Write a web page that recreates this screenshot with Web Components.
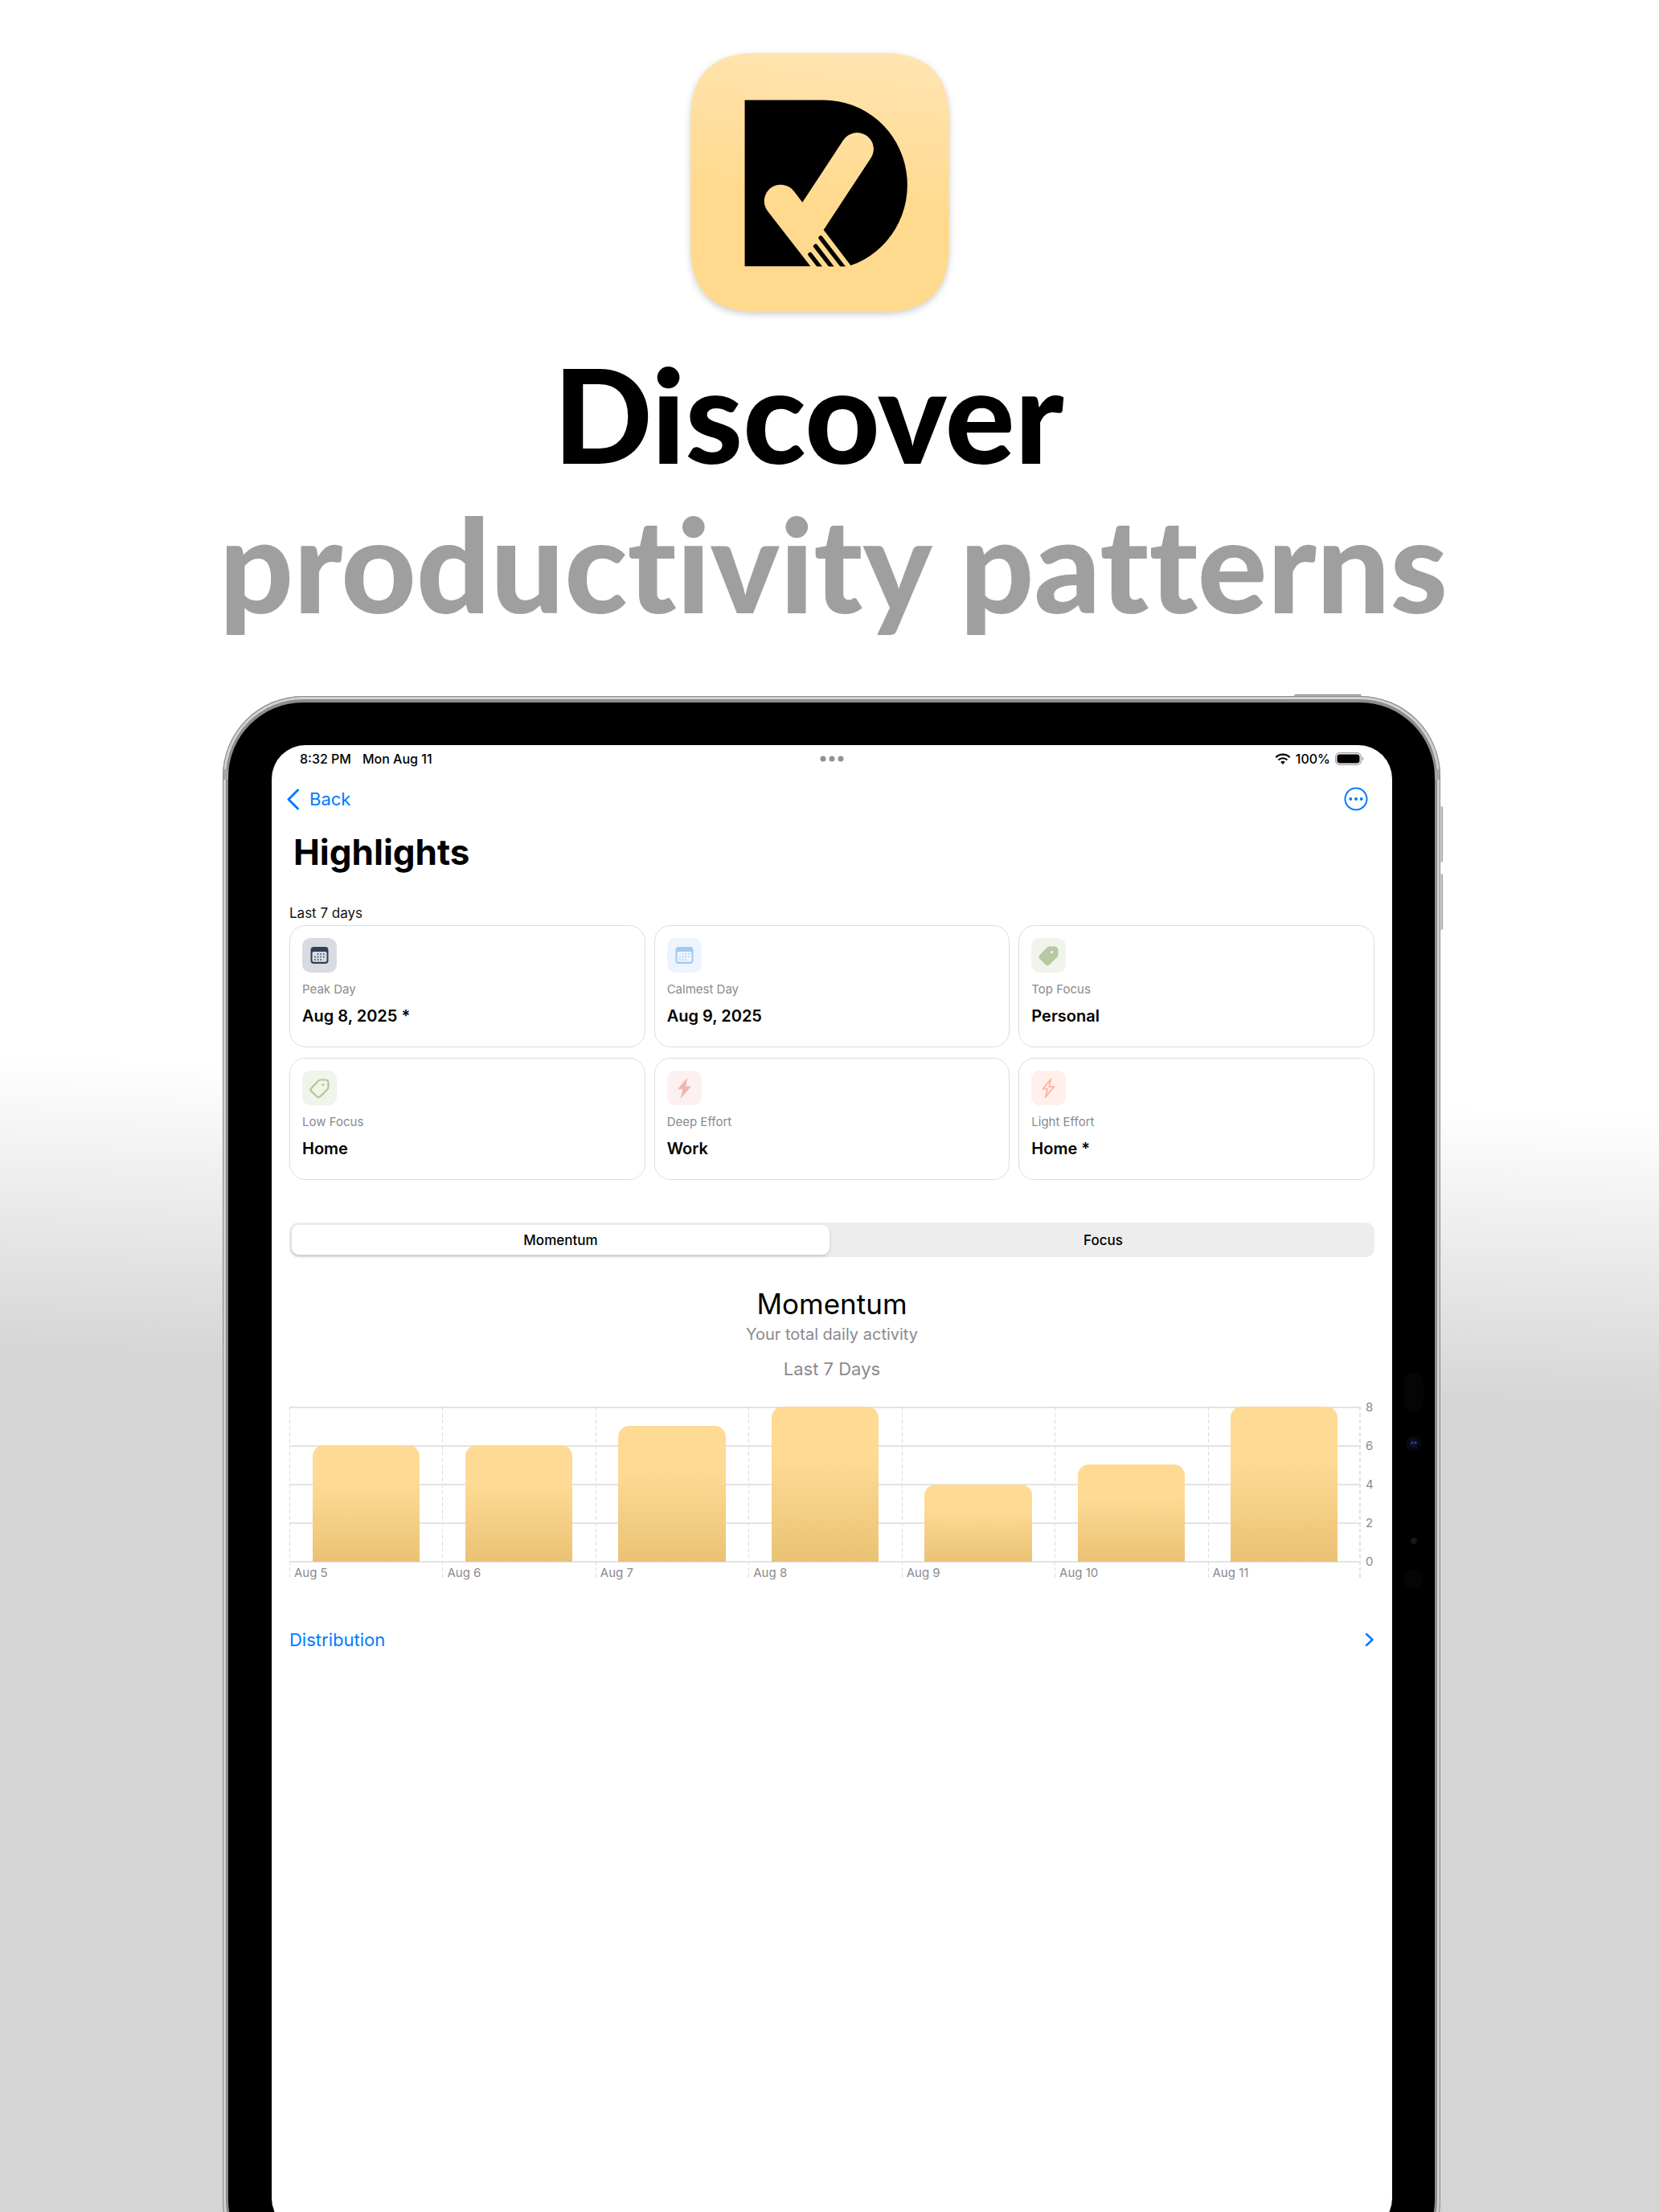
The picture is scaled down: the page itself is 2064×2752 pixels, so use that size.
<!DOCTYPE html>
<html lang="en">
<head>
<meta charset="utf-8">
<title>Discover productivity patterns</title>
<style>
  html, body { margin: 0; height: 100%; }
  body { font-family: Inter, "Liberation Sans", sans-serif; color: #000; }
</style>
</head>
<body>
<promo-page>
  <promo-headline slot="headline">
    <app-logo slot="logo"></app-logo>
    <span slot="lead">Discover</span>
    <span slot="rest">productivity patterns</span>
  </promo-headline>
  <tablet-frame>
    <status-bar></status-bar>
    <nav-bar></nav-bar>
    <highlight-grid>
      <stat-card label="Peak Day" value="Aug 8, 2025 *" icon="calendar" ink="#2f4059" tint="#d8dce2"></stat-card>
      <stat-card label="Calmest Day" value="Aug 9, 2025" icon="calendar" ink="#a3c9f0" tint="#edf4fd"></stat-card>
      <stat-card label="Top Focus" value="Personal" icon="tagfill" ink="#b7c9a3" tint="#f1f4ed"></stat-card>
      <stat-card label="Low Focus" value="Home" icon="tag" ink="#afc993" tint="#f0f4ea"></stat-card>
      <stat-card label="Deep Effort" value="Work" icon="boltfill" ink="#f0b4b4" tint="#fcf0f0"></stat-card>
      <stat-card label="Light Effort" value="Home *" icon="bolt" ink="#ffb9a6" tint="#fff0ec"></stat-card>
    </highlight-grid>
    <segment-control></segment-control>
    <bar-chart></bar-chart>
    <link-row>Distribution</link-row>
  </tablet-frame>
</promo-page>

<script>
const define = (name, html) => {
  customElements.define(name, class extends HTMLElement {
    constructor() {
      super();
      this.attachShadow({ mode: 'open' });
    }
    connectedCallback() {
      this.shadowRoot.innerHTML = typeof html === 'function' ? html(this) : html;
    }
  });
};

define('promo-page', `
  <style>
    :host { display: flex; flex-direction: column; gap: 72px; height: 100vh; overflow: hidden;
      background: linear-gradient(182deg, #fff 49%, #d5d5d5 62.2%); }
  </style>
  <slot name="headline"></slot>
  <slot></slot>`);

define('promo-headline', `
  <style>
    :host { display: flex; flex-direction: column; align-items: center; gap: 34px; padding: 66px 0 0; }
    .logo { padding-right: 24px; }
    h1 { margin: 0; padding-left: 10px; text-align: center; white-space: nowrap;
      font: 900 162px/186px Lato, sans-serif; font-variant-ligatures: none; color: #9f9f9f; }
    .lead, .rest { display: block; }
    .lead { color: #000; padding-right: 62px; }
  </style>
  <div class="logo"><slot name="logo"></slot></div>
  <h1><span class="lead"><slot name="lead"></slot></span><span class="rest"><slot name="rest"></slot></span></h1>`);

define('app-logo', `
  <style>
    :host { display: block; }
    svg { display: block; width: 322px; height: 322px; overflow: visible; filter: drop-shadow(0 3px 4px rgba(0,0,0,.2)); }
  </style>
  <svg viewBox="58 48 964 965" role="img" aria-label="App logo">
    <defs>
      <linearGradient id="g" x1=".56" y1="0" x2=".44" y2="1">
        <stop offset="0" stop-color="#ffe4b0"/><stop offset=".58" stop-color="#ffda8e"/>
      </linearGradient>
      <clipPath id="c"><path d="M260 223H900V843.500H260z"/></clipPath>
    </defs>
    <path fill="url(#g)" d="M300 48H780C940 48 1022 130 1022 290V771C1022 931 940 1013 780 1013H300C140 1013 58 931 58 771V290C58 130 140 48 300 48z"/>
    <path d="M260 223H555A312 317 0 0 1 655 840L554 707L730 440A61 61 0 0 0 628 372L475 605L443 563A61 61 0 0 0 345 637L505 843H260z"/>
    <g clip-path="url(#c)" stroke="#000" stroke-width="16" stroke-linecap="round">
      <path d="M504 799L552 861M524 768L596 861M543 737L639 861"/>
    </g>
  </svg>`);

define('tablet-frame', `
  <style>
    :host { display: block; flex: none; width: 73.4%; margin-left: 13.42%; position: relative; }
    .shell { position: relative; padding: 8px 7px; border-radius: 100px; background: #8b8e90;
      box-shadow: inset 0 0 0 1px #85888a, inset 0 0 0 4px #cfd1d3; }
    .bezel { padding: 53px 53px 53px 54px; border-radius: 93px; background: #000; }
    .screen { min-height: 1850px; border-radius: 42px; background: #fff; overflow: hidden; box-sizing: border-box;
      padding: 0 22px; display: flex; flex-direction: column; }
    i { position: absolute; }
    .key { background: linear-gradient(90deg, #9a9c9e, #e2e3e4 50%, #8a8c8e); width: 5px; height: 70px; right: -3px; border-radius: 0 2px 2px 0; }
    .up { top: 137px; } .down { top: 221px; }
    .power { top: -2px; right: 98px; width: 84px; height: 5px; border-radius: 2px 2px 0 0; background: #c4c6c7; border-top: 1px solid #77797b; box-sizing: border-box; }
    .band { top: 91px; width: 6px; height: 13px; background: #a3a5a7; }
    .band.l { left: 1px; } .band.r { right: 1px; }
    .pill { top: 842px; right: 21px; width: 25px; height: 49px; border-radius: 13px; background: #050505; }
    .cam { top: 920px; right: 24px; width: 19px; height: 19px; border-radius: 50%;
      background: radial-gradient(circle at 8px 9px, #4c5ac4, transparent 2px), radial-gradient(circle at 12px 9px, #4c5ac4, transparent 2px), radial-gradient(#0e1230 4px, #08080d 6px); }
    .mic { top: 1047px; right: 29px; width: 8px; height: 8px; border-radius: 50%; background: #161616; }
    .sensor { top: 1086px; right: 21px; width: 25px; height: 25px; border-radius: 50%; background: #050505; }
  </style>
  <i class="power"></i><i class="key up"></i><i class="key down"></i>
  <div class="shell">
    <i class="band l"></i><i class="band r"></i>
    <div class="bezel"><main class="screen"><slot></slot></main></div>
    <i class="pill"></i><i class="cam"></i><i class="mic"></i><i class="sensor"></i>
  </div>`);

define('status-bar', `
  <style>
    :host { display: grid; grid-template-columns: 1fr auto 1fr; align-items: center; height: 34px; padding: 0 13px; font: 500 16px/20px Inter, sans-serif; }
    .left { display: flex; gap: 14px; }
    .right { display: flex; gap: 6px; align-items: center; justify-content: flex-end; }
    svg { display: block; }
  </style>
  <div class="left"><span>8:32 PM</span><span>Mon Aug 11</span></div>
  <svg width="30" height="8" viewBox="0 0 30 8" fill="#919195"><circle cx="4" cy="4" r="3.500"/><circle cx="15" cy="4" r="3.500"/><circle cx="26" cy="4" r="3.500"/></svg>
  <div class="right">
    <svg width="20" height="14" viewBox="0 0 20 14" fill="none" stroke="#000" stroke-width="2.200">
      <path d="M1.300 5.200A12.300 12.300 0 0 1 18.700 5.200M4.500 8.500A7.800 7.800 0 0 1 15.500 8.500"/>
      <path fill="#000" stroke="none" d="M10 14L7.200 11.100A4 4 0 0 1 12.800 11.100z"/>
    </svg>
    <span>100%</span>
    <svg width="36" height="16" viewBox="0 0 36 16">
      <rect x=".700" y=".700" width="31.600" height="14.600" rx="4.800" fill="none" stroke="#a0a0a0" stroke-width="1.300"/>
      <rect x="2.500" y="2.500" width="28" height="11" rx="3.200"/><path fill="#a0a0a0" d="M33.700 5.500C35.800 6.300 35.800 9.700 33.700 10.500z"/>
    </svg>
  </div>`);

define('nav-bar', `
  <style>
    :host { display: block; }
    .bar { display: flex; justify-content: space-between; align-items: center; height: 66px; padding: 0 8px 0 0; }
    button { font: 400 22px/28px Inter, sans-serif; color: #007aff; border: 0; padding: 0; background: none; display: flex; align-items: center; gap: 12px; }
    .back { margin-left: -4px; }
    svg { display: block; fill: none; stroke: #0a7aff; }
    h2 { margin: 0; padding: 5px 0 0 5px; font: 700 44px/56px Inter, sans-serif; }
  </style>
  <div class="bar">
    <button class="back"><svg width="17" height="28" viewBox="0 0 17 28" stroke-width="3" stroke-linecap="round" stroke-linejoin="round"><path d="M14.500 3L3 14.500L14.500 26"/></svg>Back</button>
    <button aria-label="More"><svg width="30" height="30" viewBox="0 0 30 30" stroke-width="2"><circle cx="15" cy="15" r="13.500"/><g fill="#0a7aff" stroke="none"><circle cx="8.300" cy="15" r="2"/><circle cx="15" cy="15" r="2"/><circle cx="21.700" cy="15" r="2"/></g></svg></button>
  </div>
  <h2>Highlights</h2>`);

define('highlight-grid', `
  <style>
    :host { display: block; margin-top: 36px; }
    h3 { margin: 0; font: 400 17px/24px Inter, sans-serif; color: #111; }
    .grid { display: grid; grid-template-columns: repeat(3, 1fr); gap: 13px 11px; margin-top: 3px; }
  </style>
  <h3>Last 7 days</h3>
  <div class="grid"><slot></slot></div>`);

const tagPath = 'M22.500 11.500H28.500C31 11.500 32.500 13 32.500 15.500V20.500C32.500 21.700 32.200 22.500 31.400 23.300L22.200 32.300C20.900 33.600 19.700 33.600 18.400 32.300L11.400 25.600C10 24.300 10 23 11.400 21.700L20 12.700C20.800 11.900 21.400 11.500 22.500 11.500z';
const calendar = `
  <path fill="currentColor" fill-rule="evenodd" d="M14.500 11H28.500A4 4 0 0 1 32.500 15V28A4 4 0 0 1 28.500 32H14.500A4 4 0 0 1 10.500 28V15A4 4 0 0 1 14.500 11zM14.300 17A1.800 1.800 0 0 0 12.500 18.800V28A1.800 1.800 0 0 0 14.300 29.800H28.700A1.800 1.800 0 0 0 30.500 28V18.800A1.800 1.800 0 0 0 28.700 17z"/>
  <g stroke="currentColor" stroke-width="1.600" stroke-dasharray="1.600 2"><path d="M18.700 20H27.700M15.100 23.500H27.700M15.100 27H24.100"/></g>`;
const icons = {
  calendar,
  tag: `<path fill="none" stroke="currentColor" stroke-width="2.200" d="${tagPath}"/><circle cx="26" cy="17.500" r="1.600" fill="currentColor"/>`,
  tagfill: `<path fill="currentColor" stroke="currentColor" stroke-width="2" d="${tagPath}"/><circle cx="25.500" cy="17.500" r="1.600" fill="#f1f4ed"/>`,
  boltfill: `<path fill="currentColor" stroke="currentColor" stroke-width="1" stroke-linejoin="round" d="M24.500 10L14 22.800H20.300L17.500 33.500L29 20H22.500z"/>`,
  bolt: `<path fill="none" stroke="currentColor" stroke-width="2" stroke-linejoin="round" d="M24.500 10.500L14.300 22.800H20.300L17.500 33L28.500 20H22.200z"/>`
};

define('stat-card', el => `
  <style>
    :host { display: block; box-sizing: border-box; height: 152px; padding: 15px; border: 1px solid #dcdcdc; border-radius: 20px; background: #fff; }
    svg { display: block; width: 43px; height: 43px; border-radius: 10px; }
    dl { margin: 0; }
    dt { margin-top: 11px; font: 400 15px/20px Inter, sans-serif; color: #8a8a8e; }
    dd { margin: 10px 0 0; font: 600 20px/26px Inter, sans-serif; }
  </style>
  <svg viewBox="0 0 43 43" style="background:${el.getAttribute('tint')};color:${el.getAttribute('ink')}">${icons[el.getAttribute('icon')]}</svg>
  <dl><dt>${el.getAttribute('label')}</dt><dd>${el.getAttribute('value')}</dd></dl>`);

define('segment-control', `
  <style>
    :host { display: grid; grid-template-columns: 1fr 1fr; gap: 6px; margin-top: 53px; height: 43px; box-sizing: border-box; padding: 3px; border-radius: 11px; background: #ededee; }
    button { border: 0; padding: 0; border-radius: 9px; background: none; color: #000; font: 500 17px/22px Inter, sans-serif; }
    button[aria-selected="true"] { background: #fff; box-shadow: 0 2px 4px rgba(0,0,0,.16); }
  </style>
  <button role="tab" aria-selected="true">Momentum</button>
  <button role="tab" aria-selected="false">Focus</button>`);

const series = [['Aug 5', 6], ['Aug 6', 6], ['Aug 7', 7], ['Aug 8', 8], ['Aug 9', 4], ['Aug 10', 5], ['Aug 11', 8]];
define('bar-chart', `
  <style>
    :host { display: block; margin-top: 35px; text-align: center; color: #8a8a8e; font-family: Inter, sans-serif; }
    h2 { margin: 0; font: 400 35px/46px Inter, sans-serif; color: #000; }
    .sub { margin: 1px 0 0; font-size: 20px; line-height: 28px; }
    .range { margin: 15px 0 0; font-size: 22px; line-height: 28px; }
    .chart { display: grid; grid-template-columns: 1fr 17px; margin-top: 33px; font-size: 15px; line-height: 18px; }
    .plot { display: grid; }
    .plot > * { grid-area: 1 / 1; }
    .lines { height: 194px; display: flex; flex-direction: column; justify-content: space-between; }
    .lines b { height: 2px; background: #e3e3e3; }
    .cols { display: grid; grid-template-columns: repeat(7, 1fr); height: 216px;
      background: repeating-linear-gradient(#e2e2e2 0 5px, transparent 5px 8px) right / 2px 100% no-repeat; }
    .col { background: repeating-linear-gradient(#dedede 0 5px, transparent 5px 8px) left / 1px 100% no-repeat; }
    .slot { height: 193px; display: flex; align-items: flex-end; padding: 0 15%; }
    .slot b { flex: 1; border-radius: 14px 14px 0 0; background: linear-gradient(180deg, #ffda94 33%, #e9c274); }
    .col span { display: block; text-align: left; padding: 5px 0 0 6px; }
    .axis { display: flex; flex-direction: column; justify-content: space-between; height: 210px; margin-top: -8px; padding-left: 6px; text-align: left; }
  </style>
  <h2>Momentum</h2>
  <p class="sub">Your total daily activity</p>
  <p class="range">Last 7 Days</p>
  <div class="chart">
    <div class="plot">
      <div class="lines"><b></b><b></b><b></b><b></b><b></b></div>
      <div class="cols">${series.map(([d, n]) => `<div class="col"><div class="slot"><b style="height:${n / 8 * 100}%"></b></div><span>${d}</span></div>`).join('')}</div>
    </div>
    <div class="axis"><span>8</span><span>6</span><span>4</span><span>2</span><span>0</span></div>
  </div>`);

define('link-row', `
  <style>
    :host { display: block; margin-top: 60px; }
    a { display: flex; justify-content: space-between; align-items: center; color: #007aff; text-decoration: none; font: 400 22px/28px Inter, sans-serif; }
    svg { display: block; }
  </style>
  <a href="#"><slot></slot><svg width="12" height="18" viewBox="0 0 12 18" fill="none" stroke="#0a7aff" stroke-width="2.500" stroke-linecap="round" stroke-linejoin="round"><path d="M2 2L9.500 9L2 16"/></svg></a>`);
</script>
</body>
</html>
